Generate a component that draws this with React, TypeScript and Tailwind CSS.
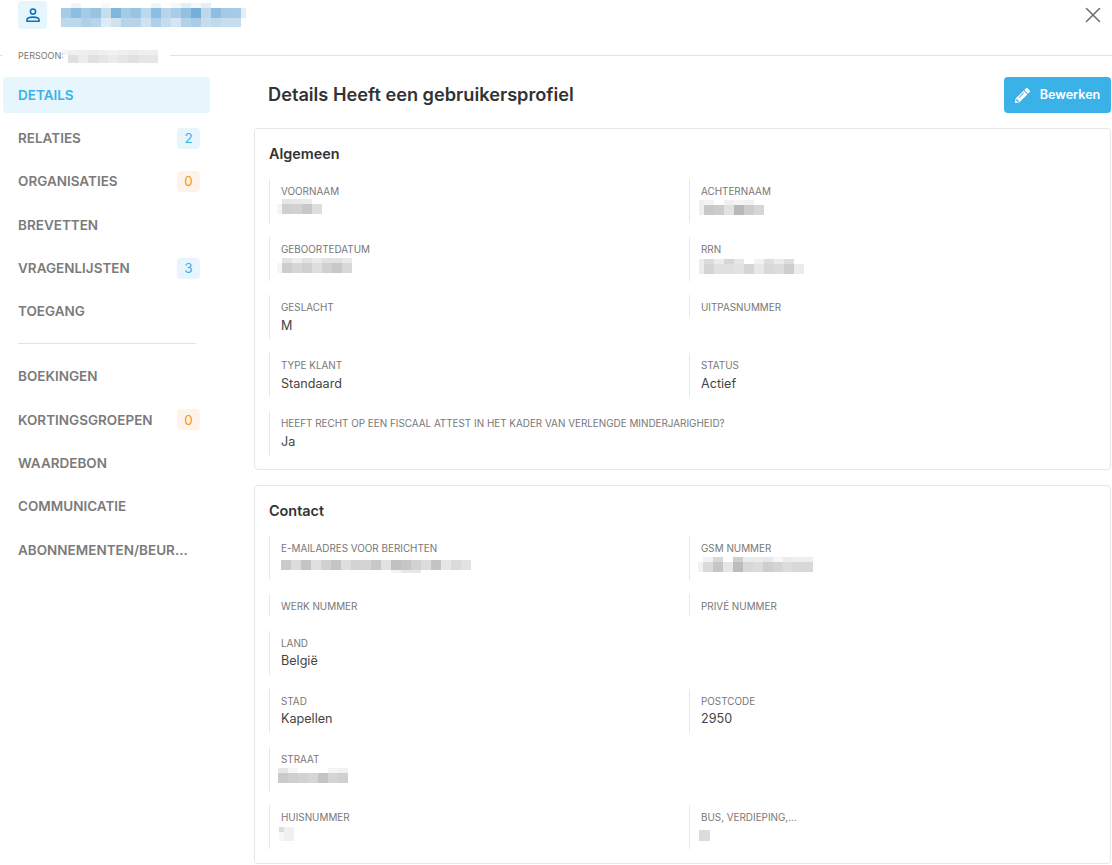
import { X } from 'lucide-react'
import { FaPencilAlt } from 'react-icons/fa'

const NAV_TOP = [
  { label: 'Details', active: true },
  { label: 'Relaties', badge: '2' },
  { label: 'Organisaties', badge: '0', warn: true },
  { label: 'Brevetten' },
  { label: 'Vragenlijsten', badge: '3' },
  { label: 'Toegang' },
]

const NAV_BOTTOM = [
  { label: 'Boekingen' },
  { label: 'Kortingsgroepen', badge: '0', warn: true },
  { label: 'Waardebon' },
  { label: 'Communicatie' },
  { label: 'Abonnementen/beur...' },
]

type NavEntry = { label: string; active?: boolean; badge?: string; warn?: boolean }

function NavItem({ label, active, badge, warn }: NavEntry) {
  return (
    <div
      className={`h-9 mb-[7.3px] pl-[15px] pr-[10px] rounded flex items-center justify-between text-[13.5px] font-semibold uppercase ${
        active ? 'bg-[#e7f5fd] text-[#3ab2e8]' : 'text-[#7b7b7b]'
      }`}
    >
      <span>{label}</span>
      {badge && (
        <span
          className={`w-[23px] h-[21px] rounded flex items-center justify-center font-normal ${
            warn ? 'bg-[#fef3e9] text-[#f7941d]' : 'bg-[#e7f5fd] text-[#3ab2e8]'
          }`}
        >
          {badge}
        </span>
      )}
    </div>
  )
}

// pixelated (censored) patches from the original screenshot
type Patch = { heights: number[]; rows: string[][]; leadW?: number; trailW?: number; cell?: number }

function Censor({ patch, className = '' }: { patch: Patch; className?: string }) {
  const { heights, rows, leadW, trailW, cell = 10 } = patch
  return (
    <div className={`flex flex-col ${className}`}>
      {rows.map((row, i) => (
        <div key={i} className="flex">
          {row.map((c, j) => {
            let width = cell
            if (j === 0 && leadW) width = leadW
            if (j === row.length - 1 && trailW) width = trailW
            return <span key={j} style={{ width, height: heights[i], backgroundColor: c }} />
          })}
        </div>
      ))}
    </div>
  )
}

const W = '#ffffff'

const PATCHES: Record<string, Patch> = {
  title: {
    heights: [5, 10, 9],
    trailW: 5,
    rows: [
      [W, '#eef5fb', W, W, '#f4f9fc', W, W, W, W, '#eef5fb', W, '#f4f9fc', '#e3eff8', '#f4f9fc', '#e3eff8', W, W, W, W],
      ['#a5cbe6', '#8dbde0', '#a3cae6', '#98c4e2', '#c5dded', '#7fb6dc', '#a3cae6', '#98c4e2', '#bcd8ec', '#8dbde0', '#b7d4ea', '#a9cde6', '#93c1e1', '#76b0d9', '#bcd8ec', '#8dbde0', '#a3cae6', '#a5cbe6', '#e3eff8'],
      ['#bcd8ec', '#bcd8ec', '#aed0e8', '#b7d4ea', '#dcebf5', '#cfe2f1', '#b7d4ea', '#b7d4ea', '#cfe2f1', '#aed0e8', '#c5dded', '#d5e6f2', '#b0d1e8', '#a9cde6', '#c5dded', '#c0daec', '#c5dded', '#c5dded', W],
    ],
  },
  persoon: {
    heights: [5, 8],
    leadW: 5,
    rows: [
      ['#f4f4f4', '#f0f0f0', '#efefef', '#ececea', '#efefef', '#f2f2f2', '#efefef', '#ededed', '#efeff0', '#eeeeee'],
      [W, '#e0e0e0', '#ececec', '#e0e0de', '#e6e6e6', '#ececec', '#e6e6e4', '#e0e0e0', '#e6e6e8', '#e6e6e6'],
    ],
  },
  voornaam: {
    heights: [5, 10],
    leadW: 5,
    rows: [
      [W, '#e6e6e6', '#e8e8e8', '#ececec', W],
      ['#f4f4f4', '#cfcfcf', '#d2d2d2', '#c8c8c8', '#dedede'],
    ],
  },
  achternaam: {
    heights: [5, 10],
    leadW: 5,
    rows: [
      ['#eeeeee', '#f4f4f4', W, '#f0f0f0', '#f4f4f4', '#f0f0f0', W],
      ['#eeeeee', '#c8c8c8', '#cccccc', '#e2e2e2', '#b8b8b8', '#cdcdcd', '#d6d6d6'],
    ],
  },
  geboorte: {
    heights: [5, 10],
    leadW: 5,
    rows: [
      [W, '#e2e2e2', '#eeeeee', '#e2e2e2', '#eaeaea', '#e2e2e2', '#e2e2e2', '#eaeaea'],
      ['#f6f6f6', '#cdcdcd', '#d6d6d6', '#d0d0d0', '#dededc', '#d0d0d0', '#c8c8c8', '#d8d8d8'],
    ],
  },
  rrn: {
    heights: [5, 10],
    leadW: 5,
    rows: [
      ['#ececec', '#dcdcdc', '#ececec', '#d6d6d6', '#e6e6e6', W, '#f2f2f2', '#dedede', '#ebebeb', '#dedede', W],
      ['#ececec', '#d4d4d4', '#e0e0e0', '#e0e0e0', '#e2e2e2', '#d6d6d6', '#e8e8e8', '#d8d8d8', '#dcdcdc', '#cecece', '#ececec'],
    ],
  },
  email: {
    heights: [10, 3],
    rows: [
      ['#cacaca', '#dcdcdc', '#c4c4c4', '#e0e0e0', '#d0d0d0', '#c4c4c4', '#dedede', '#d2d2d2', '#d4d4d4', '#c8c8c8', '#e2e2e2', '#c0c0c0', '#c6c6c6', '#d2d2d2', '#dcdcdc', '#c4c4c4', '#e6e6e6', '#dadada', '#e2e2e2'],
      [W, W, W, W, W, W, W, W, W, W, W, '#f4f4f4', '#e8e8e8', '#e6e6e6', W, W, W, W, W],
    ],
  },
  gsm: {
    heights: [5, 10],
    leadW: 5,
    rows: [
      [W, '#f2f2f2', '#d8d8d8', W, '#cfcfcf', '#ebebeb', '#ebebeb', '#e8e8e8', '#f6f6f6', '#ebebeb', '#eeeeee', '#eeeeee'],
      ['#f2f2f2', '#dadada', '#c6c6c6', '#e6e6e6', '#bcbcbc', '#d8d8d8', '#dcdcdc', '#cecece', '#d4d4d4', '#dcdcdc', '#d8d8d8', '#d8d8d8'],
    ],
  },
  straat: {
    heights: [5, 10],
    rows: [
      ['#e6e6e6', '#f6f6f6', W, W, W, '#f4f4f4', '#f2f2f2'],
      ['#cacaca', '#cfcfcf', '#d2d2d2', '#d6d6d6', '#c4c4c4', '#d4d4d4', '#d0d0d0'],
    ],
  },
  huis: {
    heights: [5, 9],
    leadW: 5,
    rows: [
      ['#dcdcdc', '#f0f0f0'],
      ['#f7f7f7', '#f0f0f0'],
    ],
  },
  bus: { heights: [11], cell: 11, rows: [['#dcdcdc']] },
}

function Field({
  label,
  value,
  valueClass = 'mt-[4px]',
  patch,
  patchClass = '',
  className = '',
}: {
  label: string
  value?: string
  valueClass?: string
  patch?: Patch
  patchClass?: string
  className?: string
}) {
  const filled = Boolean(value || patch)
  return (
    <div
      className={`border-l border-[#e8e8e8] pl-[11px] pt-[6px] ${
        filled ? 'h-[44px] mb-[14px]' : 'h-[22px] mb-[15px]'
      } ${className}`}
    >
      <div className="text-[9.9px] leading-[12px] text-[#777777] uppercase">{label}</div>
      {value && <div className={`text-[12.6px] leading-[16px] text-[#444444] ${valueClass}`}>{value}</div>}
      {patch && <Censor patch={patch} className={patchClass} />}
    </div>
  )
}

function Card({ title, className = '', children }: { title: string; className?: string; children: React.ReactNode }) {
  return (
    <section className={`border border-[#e6e6e6] rounded bg-white px-[14px] ${className}`}>
      <h2 className="text-[14.4px] font-semibold text-[#333333] leading-[20px] mt-[15px] mb-[15px]">{title}</h2>
      <div className="grid grid-cols-[420px_1fr] items-start">{children}</div>
    </section>
  )
}

export default function App() {
  return (
    <div className="w-[1112px] h-[865px] overflow-hidden bg-white font-['Inter',sans-serif]">
      {/* Header */}
      <header className="h-[47px] pl-[18px] pr-[6px] flex items-start justify-between">
        <div className="flex items-start gap-[14px]">
          <div className="mt-px w-[29px] h-[28px] rounded bg-[#e7f5fd] flex items-center justify-center">
            <svg width="16" height="16" viewBox="0 0 16 16" fill="none" stroke="#0b74b8" strokeWidth="1.6">
              <circle cx="8" cy="4.6" r="2.6" />
              <path d="M2 14.2v-1.4c0-1.5 2.6-2.7 6-2.7s6 1.2 6 2.7v1.4z" />
            </svg>
          </div>
          <Censor patch={PATCHES.title} className="mt-[3px]" />
        </div>
        <X size={26} strokeWidth={1.4} className="text-[#6f6f6f] mt-[2px]" />
      </header>

      {/* Persoon legend */}
      <div className="flex items-center h-4">
        <div className="w-[3px] h-px bg-[#e4e4e4]" />
        <div className="ml-[15px] w-[45px] text-[9px] leading-none text-[#777777] uppercase">Persoon:</div>
        <Censor patch={PATCHES.persoon} className="mt-[2px]" />
        <div className="ml-[12px] flex-1 h-px bg-[#e4e4e4]" />
      </div>

      <div className="flex mt-[14px]">
        {/* Sidebar */}
        <nav className="w-[207px] ml-[3px] shrink-0 flex flex-col">
          {NAV_TOP.map((n) => (
            <NavItem key={n.label} {...n} />
          ))}
          <div className="ml-[15px] w-[178px] h-px bg-[#e4e4e4] mt-[6.4px] mb-[14.4px]" />
          {NAV_BOTTOM.map((n) => (
            <NavItem key={n.label} {...n} />
          ))}
        </nav>

        {/* Main */}
        <main className="ml-11 w-[857px]">
          <div className="h-9 pl-[14px] flex items-center justify-between">
            <h1 className="text-[18.2px] font-semibold text-[#333333]">Details Heeft een gebruikersprofiel</h1>
            <button className="w-[107px] h-9 rounded bg-[#3ab2e8] text-white text-[12.6px] font-semibold flex items-center justify-center gap-[10px]">
              <FaPencilAlt size={15} />
              Bewerken
            </button>
          </div>

          <Card title="Algemeen" className="mt-[15px] h-[342px]">
            <Field label="Voornaam" patch={PATCHES.voornaam} patchClass="mt-[2px] -ml-[4px]" />
            <Field label="Achternaam" patch={PATCHES.achternaam} patchClass="mt-[3px] -ml-[2px]" />
            <Field label="Geboortedatum" patch={PATCHES.geboorte} patchClass="mt-[3px] -ml-[4px]" />
            <Field label="RRN" patch={PATCHES.rrn} patchClass="mt-[4px] -ml-[2px]" />
            <Field label="Geslacht" value="M" valueClass="mt-[5px]" />
            <Field label="Uitpasnummer" />
            <Field label="Type klant" value="Standaard" valueClass="mt-[5px]" />
            <Field label="Status" value="Actief" valueClass="mt-[5px]" />
            <Field
              label="Heeft recht op een fiscaal attest in het kader van verlengde minderjarigheid?"
              value="Ja"
              valueClass="mt-[5px]"
              className="col-span-2"
            />
          </Card>

          <Card title="Contact" className="mt-[15px] h-[379px]">
            <Field label="E-mailadres voor berichten" patch={PATCHES.email} patchClass="mt-[6px]" />
            <Field label="GSM nummer" patch={PATCHES.gsm} patchClass="mt-[3px] -ml-[3px]" />
            <Field label="Werk nummer" />
            <Field label="Privé nummer" />
            <Field label="Land" value="België" className="col-span-2" />
            <Field label="Stad" value="Kapellen" />
            <Field label="Postcode" value="2950" />
            <Field label="Straat" patch={PATCHES.straat} patchClass="mt-[3px] -ml-[3px]" className="col-span-2" />
            <Field label="Huisnummer" patch={PATCHES.huis} patchClass="mt-[4px] -ml-[2px]" />
            <Field label="Bus, verdieping,..." patch={PATCHES.bus} patchClass="mt-[7px] -ml-[2px]" />
          </Card>
        </main>
      </div>
    </div>
  )
}
